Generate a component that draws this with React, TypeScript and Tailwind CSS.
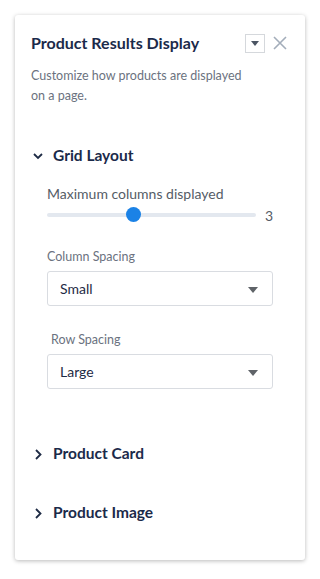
import React from "react";

const font = { fontFamily: "Lato, 'Noto Sans', sans-serif" };

function Caret({ className = "" }: { className?: string }) {
  return (
    <svg width="10" height="6" viewBox="0 0 10 6" className={className}>
      <path d="M0 0 L10 0 L5 6 Z" fill="#5f6368" />
    </svg>
  );
}

function Select({ value }: { value: string }) {
  return (
    <div className="flex h-[35px] w-[226px] items-center justify-between rounded-[3px] border border-[#d9dce1] bg-white pl-[12px] pr-[14px]">
      <span className="text-[14px] leading-none text-[#1e2b45]">{value}</span>
      <Caret className="mt-[2px]" />
    </div>
  );
}

function SectionHeader({ open, label }: { open?: boolean; label: string }) {
  return (
    <div className="flex h-[20px] items-center">
      <div className="flex w-[22px] items-center pl-[2px]">
        {open ? (
          <svg width="10" height="7" viewBox="0 0 10 7">
            <path d="M1 1 L5 5 L9 1" stroke="#1e2b45" strokeWidth="1.8" fill="none" />
          </svg>
        ) : (
          <svg width="7" height="11" viewBox="0 0 7 11" className="ml-[2px]">
            <path d="M1 1 L5.5 5.5 L1 10" stroke="#1e2b45" strokeWidth="1.8" fill="none" />
          </svg>
        )}
      </div>
      <span className="text-[15.5px] font-bold text-[#1b2a4a]">{label}</span>
    </div>
  );
}

export default function App() {
  return (
    <div className="min-h-[579px] w-[320px] bg-white pt-[15px] pl-[15px]" style={font}>
      <div className="h-[545px] w-[290px] rounded-[3px] bg-white shadow-[0_1px_4px_rgba(0,0,0,0.28)]">
        <div className="pt-[18px] pl-[16px] pr-[18px]">
          <div className="flex h-[20px] items-center justify-between">
            <span className="text-[16px] font-bold text-[#1b2a4a]">Product Results Display</span>
            <div className="flex items-center gap-[8px]">
              <div className="flex h-[19px] w-[20px] items-center justify-center border border-[#d5d8dc] bg-white">
                <svg width="8" height="5" viewBox="0 0 8 5">
                  <path d="M0 0 L8 0 L4 5 Z" fill="#4b5563" />
                </svg>
              </div>
              <svg width="14" height="14" viewBox="0 0 14 14">
                <path d="M1 1 L13 13 M13 1 L1 13" stroke="#a3adba" strokeWidth="1.6" />
              </svg>
            </div>
          </div>
          <p className="mt-[13px] w-[222px] text-[12.5px] leading-[20px] text-[#6b7280]">
            Customize how products are displayed on a page.
          </p>
        </div>

        <div className="mt-[40px] pl-[16px]">
          <SectionHeader open label="Grid Layout" />
          <div className="pl-[16px]">
            <div className="mt-[18px] text-[14px] leading-[20px] text-[#555c66]">Maximum columns displayed</div>
            <div className="mt-[2px] flex h-[18px] items-center">
              <div className="relative h-[4px] w-[209px] rounded-full bg-[#e3e8ef]">
                <div className="absolute left-[79px] top-[-6px] h-[15px] w-[15px] rounded-full bg-[#1b82e6]" />
              </div>
              <span className="ml-[9px] text-[14px] text-[#555c66]">3</span>
            </div>
            <div className="mt-[23px] text-[12.5px] leading-[20px] text-[#6b7280]">Column Spacing</div>
            <div className="mt-[4px]">
              <Select value="Small" />
            </div>
            <div className="mt-[24px] pl-[4px] text-[12.5px] leading-[20px] text-[#6b7280]">Row Spacing</div>
            <div className="mt-[4px]">
              <Select value="Large" />
            </div>
          </div>
          <div className="mt-[55px]">
            <SectionHeader label="Product Card" />
          </div>
          <div className="mt-[39px]">
            <SectionHeader label="Product Image" />
          </div>
        </div>
      </div>
    </div>
  );
}
